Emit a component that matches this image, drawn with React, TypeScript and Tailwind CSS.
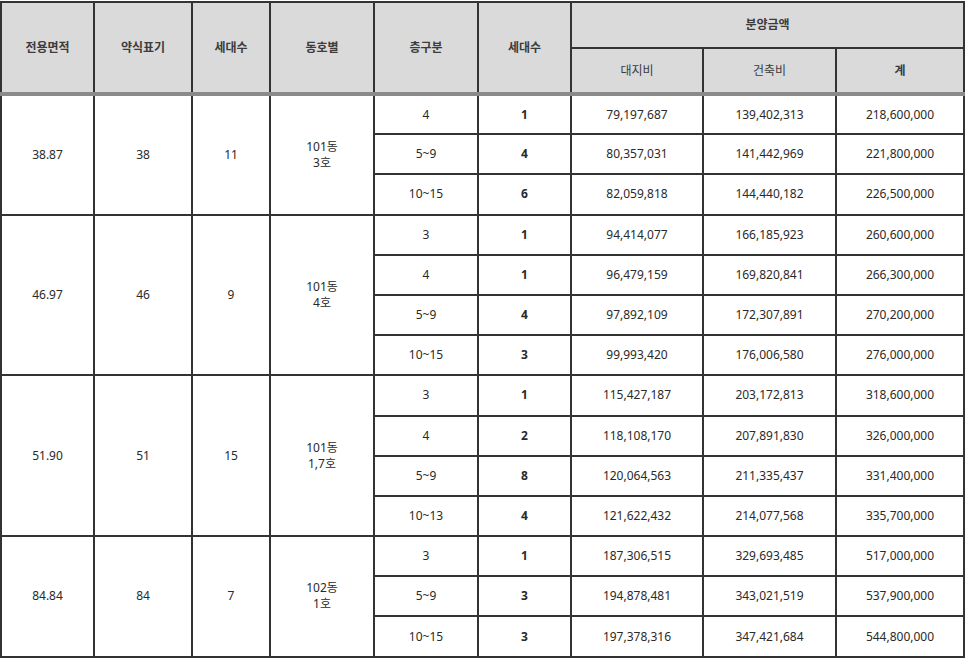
import React from "react";

type Row = { floor: string; units: string; land: string; build: string; total: string };
type Group = { area: string; short: string; count: string; dong: string; ho: string; rows: Row[] };

const groups: Group[] = [
  {
    area: "38.87", short: "38", count: "11", dong: "101동", ho: "3호",
    rows: [
      { floor: "4", units: "1", land: "79,197,687", build: "139,402,313", total: "218,600,000" },
      { floor: "5~9", units: "4", land: "80,357,031", build: "141,442,969", total: "221,800,000" },
      { floor: "10~15", units: "6", land: "82,059,818", build: "144,440,182", total: "226,500,000" },
    ],
  },
  {
    area: "46.97", short: "46", count: "9", dong: "101동", ho: "4호",
    rows: [
      { floor: "3", units: "1", land: "94,414,077", build: "166,185,923", total: "260,600,000" },
      { floor: "4", units: "1", land: "96,479,159", build: "169,820,841", total: "266,300,000" },
      { floor: "5~9", units: "4", land: "97,892,109", build: "172,307,891", total: "270,200,000" },
      { floor: "10~15", units: "3", land: "99,993,420", build: "176,006,580", total: "276,000,000" },
    ],
  },
  {
    area: "51.90", short: "51", count: "15", dong: "101동", ho: "1,7호",
    rows: [
      { floor: "3", units: "1", land: "115,427,187", build: "203,172,813", total: "318,600,000" },
      { floor: "4", units: "2", land: "118,108,170", build: "207,891,830", total: "326,000,000" },
      { floor: "5~9", units: "8", land: "120,064,563", build: "211,335,437", total: "331,400,000" },
      { floor: "10~13", units: "4", land: "121,622,432", build: "214,077,568", total: "335,700,000" },
    ],
  },
  {
    area: "84.84", short: "84", count: "7", dong: "102동", ho: "1호",
    rows: [
      { floor: "3", units: "1", land: "187,306,515", build: "329,693,485", total: "517,000,000" },
      { floor: "5~9", units: "3", land: "194,878,481", build: "343,021,519", total: "537,900,000" },
      { floor: "10~15", units: "3", land: "197,378,316", build: "347,421,684", total: "544,800,000" },
    ],
  },
];

const th = "border-2 border-[#333] bg-[#dadada] text-[12px] font-bold text-[#3c3c3c] text-center align-middle";
const thb = `${th} border-b-4 border-b-[#8a8a8a]`;
const td = "border-2 border-[#333] text-[12px] text-[#2a2a2a] text-center align-middle";

export default function App() {
  return (
    <div
      className="min-h-screen bg-white pt-[1px]"
      style={{ fontFamily: '"Noto Sans", "Noto Sans CJK KR", sans-serif' }}
    >
      <table className="w-[963px] table-fixed border-collapse">
        <colgroup>
          <col className="w-[93px]" />
          <col className="w-[98px]" />
          <col className="w-[78px]" />
          <col className="w-[104px]" />
          <col className="w-[104px]" />
          <col className="w-[93px]" />
          <col className="w-[132px]" />
          <col className="w-[133px]" />
          <col className="w-[128px]" />
        </colgroup>
        <thead>
          <tr className="h-[46px]">
            <th rowSpan={2} className={thb}>전용면적</th>
            <th rowSpan={2} className={thb}>약식표기</th>
            <th rowSpan={2} className={thb}>세대수</th>
            <th rowSpan={2} className={thb}>동호별</th>
            <th rowSpan={2} className={thb}>층구분</th>
            <th rowSpan={2} className={thb}>세대수</th>
            <th colSpan={3} className={th}>분양금액</th>
          </tr>
          <tr className="h-[46px]">
            <th className={`${thb} font-normal`}>대지비</th>
            <th className={`${thb} font-normal`}>건축비</th>
            <th className={thb}>계</th>
          </tr>
        </thead>
        <tbody>
          {groups.map((g) =>
            g.rows.map((r, i) => (
              <tr key={g.area + i} className="h-[40.2px]">
                {i === 0 && (
                  <>
                    <td rowSpan={g.rows.length} className={td}>{g.area}</td>
                    <td rowSpan={g.rows.length} className={td}>{g.short}</td>
                    <td rowSpan={g.rows.length} className={td}>{g.count}</td>
                    <td rowSpan={g.rows.length} className={td}>
                      <div className="leading-[16px]">{g.dong}</div>
                      <div className="leading-[16px]">{g.ho}</div>
                    </td>
                  </>
                )}
                <td className={td}>{r.floor}</td>
                <td className={`${td} font-bold`}>{r.units}</td>
                <td className={td}>{r.land}</td>
                <td className={td}>{r.build}</td>
                <td className={td}>{r.total}</td>
              </tr>
            ))
          )}
        </tbody>
      </table>
    </div>
  );
}
